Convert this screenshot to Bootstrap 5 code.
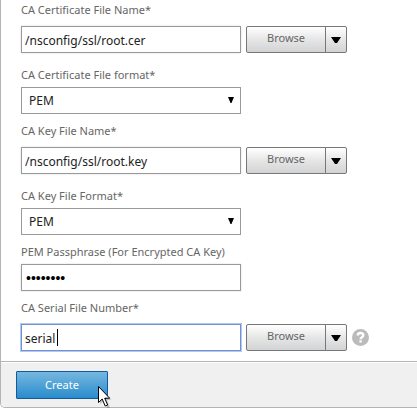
<!DOCTYPE html>
<html lang="en">
<head>
<meta charset="utf-8">
<meta name="viewport" content="width=device-width, initial-scale=1">
<title>Create certificate</title>
<link rel="stylesheet" href="https://cdn.jsdelivr.net/npm/bootstrap@5.3.0/dist/css/bootstrap.min.css">
<style>
body { font-family: "Noto Sans", "Open Sans", sans-serif; overflow: hidden; background: #fff; }
.cert-panel { border: solid #b4b4b4; border-width: 0 0 1px 1px; border-bottom-left-radius: 5px; }
.cert-fields { padding: 2px 16px 10px 20px; }
.cert-fields .form-label { display: block; margin: 0 0 4px; font-size: 11px; line-height: 16px; color: #666; }
.field-plain { margin-bottom: 9px; }
.field-browse .form-label { margin-bottom: 8px; }
.field-browse { margin-bottom: 14px; }
.field-last { margin-bottom: 0; }
.field-box { flex: 0 1 220px; min-width: 0; }
.cert-fields .form-control, .cert-fields .form-select {
  height: 27px; padding: 1px 3px 0; font-size: 12px; line-height: 18px; color: #222;
  border: 1px solid #999; border-radius: 0; box-shadow: 0 0 2px #ddd;
}
.cert-fields .form-select {
  width: 220px; padding: 1px 20px 0 7px; box-shadow: none;
  background-image: url("data:image/svg+xml,%3Csvg xmlns='http://www.w3.org/2000/svg' viewBox='0 0 6 6'%3E%3Cpath d='M0 0h6L3.5 6h-1z'/%3E%3C/svg%3E");
  background-size: 6px 6px; background-position: right 6px top 9px;
}
.cert-fields .secret-input { width: 220px; font-family: "Liberation Sans", sans-serif; font-size: 14px; padding: 1px 4px 0; color: #000; }
.cert-fields .active-input { border-color: #6e92d8; box-shadow: 0 0 0 1px #b5c9ee; }
.text-caret { position: absolute; left: 36px; top: 5px; width: 1px; height: 17px; background: #000; }
.browse-group { margin-left: 5px; flex: none; }
.browse-group .btn {
  height: 27px; padding: 0 0 3px; font-size: 11px; line-height: 18px; color: #666;
  border: 1px solid #777; border-radius: 2px; background: linear-gradient(#fff, #e6e6e6 50%, #d2d3d5);
}
.browse-group .browse-btn { width: 80px; flex: none; }
.browse-group .menu-btn { width: 22px; flex: none; padding: 1px 0 0; }
.browse-group svg, .help-btn svg { display: block; margin: auto; }
.help-btn { margin-left: 5px; line-height: 0; }
.cert-footer { padding: 9px 14px 8px; border-top: 1px solid #b4b4b4; background: #f0f0f0; border-bottom-left-radius: 4px; box-shadow: inset 0 1px #fff; }
.cert-footer .btn {
  width: 92px; height: 28px; padding: 0 0 1px; margin-left: 1px; font-size: 11px; line-height: 18px; color: #fff;
  border: 1px solid #15599a; border-radius: 1px; background: linear-gradient(#76b8e0, #298ccb);
}
.pointer { position: absolute; left: 97px; top: 385px; }
</style>
<script src="https://cdn.jsdelivr.net/npm/bootstrap@5.3.0/dist/js/bootstrap.bundle.min.js"></script>
</head>
<body>
<form class="cert-panel">
  <div class="cert-fields">
    <div class="field-browse">
      <label class="form-label" for="certFile">CA Certificate File Name*</label>
      <div class="d-flex align-items-center">
        <div class="field-box"><input class="form-control" id="certFile" type="text" value="/nsconfig/ssl/root.cer"></div>
        <div class="btn-group browse-group">
          <button type="button" class="btn browse-btn">Browse</button>
          <button type="button" class="btn menu-btn" aria-label="Browse options for certificate"><svg width="10" height="6" viewBox="0 0 10 6"><path d="M0 0h10L6 6H4z"/></svg></button>
        </div>
      </div>
    </div>
    <div class="field-plain">
      <label class="form-label" for="certFormat">CA Certificate File format*</label>
      <select class="form-select" id="certFormat"><option>PEM</option></select>
    </div>
    <div class="field-browse">
      <label class="form-label" for="keyFile">CA Key File Name*</label>
      <div class="d-flex align-items-center">
        <div class="field-box"><input class="form-control" id="keyFile" type="text" value="/nsconfig/ssl/root.key"></div>
        <div class="btn-group browse-group">
          <button type="button" class="btn browse-btn">Browse</button>
          <button type="button" class="btn menu-btn" aria-label="Browse options for key"><svg width="10" height="6" viewBox="0 0 10 6"><path d="M0 0h10L6 6H4z"/></svg></button>
        </div>
      </div>
    </div>
    <div class="field-plain">
      <label class="form-label" for="keyFormat">CA Key File Format*</label>
      <select class="form-select" id="keyFormat"><option>PEM</option></select>
    </div>
    <div class="field-plain">
      <label class="form-label" for="passphrase">PEM Passphrase (For Encrypted CA Key)</label>
      <input class="form-control secret-input" id="passphrase" type="password" value="password">
    </div>
    <div class="field-browse field-last">
      <label class="form-label" for="serialFile">CA Serial File Number*</label>
      <div class="d-flex align-items-center">
        <div class="field-box position-relative"><input class="form-control active-input" id="serialFile" type="text" value="serial"><span class="text-caret"></span></div>
        <div class="btn-group browse-group">
          <button type="button" class="btn browse-btn">Browse</button>
          <button type="button" class="btn menu-btn" aria-label="Browse options for serial file"><svg width="10" height="6" viewBox="0 0 10 6"><path d="M0 0h10L6 6H4z"/></svg></button>
        </div>
        <button type="button" class="btn border-0 p-0 help-btn" aria-label="Help"><svg width="17" height="17" viewBox="0 0 17 17"><circle cx="8.500" cy="8.500" r="8.500" fill="#bbb"/><path d="M5.800 6.400C5.800 4.700 7 4 8.500 4s2.800.8 2.800 2.300c0 1.900-2.700 1.900-2.700 3.900" fill="none" stroke="#fff" stroke-width="2.400"/><path d="M7.400 11.300h2.400v2.200H7.400z" fill="#fff"/></svg></button>
      </div>
    </div>
  </div>
  <div class="cert-footer"><button type="button" class="btn">Create</button></div>
</form>
<svg class="pointer" width="14" height="23" viewBox="0 0 14 23" aria-hidden="true"><path d="M3 3v16l4-3 3 7h3l-3-8h4z" fill="#000" opacity=".2"/><path d="M1.500 1.500v16l3.700-3.500 3 7 2.500-1-3-6.800h5z" fill="#fff" stroke="#000"/></svg>
</body>
</html>
